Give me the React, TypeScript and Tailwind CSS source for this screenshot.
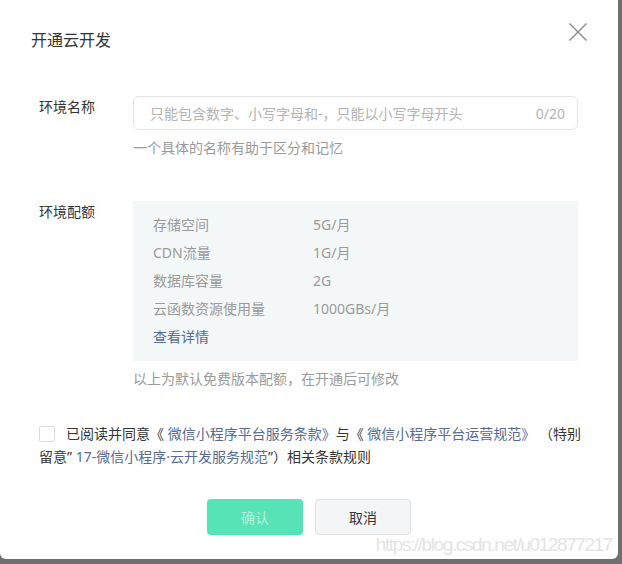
const quota = [
  { label: '存储空间', value: '5G/月' },
  { label: 'CDN流量', value: '1G/月' },
  { label: '数据库容量', value: '2G' },
  { label: '云函数资源使用量', value: '1000GBs/月' },
];

export default function App() {
  return (
    <div className="relative w-[622px] h-[564px] overflow-hidden bg-[#6f6f6f] font-['Noto_Sans','Noto_Sans_CJK_SC',sans-serif] text-[#353535]">
      <div className="relative w-[618px] h-[559px] bg-white rounded-b-[6px]">
        {/* Header */}
        <div className="pt-[28px] pl-[31px] text-[16px] leading-[24px]">开通云开发</div>
        <button className="absolute top-[23px] right-[31px] text-[#8a8a8a]">
          <svg width="18" height="18" viewBox="0 0 18 18" fill="none" stroke="currentColor" strokeWidth="1.4">
            <path d="M0.5 0.5L17.5 17.5M17.5 0.5L0.5 17.5" />
          </svg>
        </button>

        {/* Name */}
        <div className="flex mt-[44px]">
          <div className="w-[133px] pl-[39px] pt-px text-[14px] leading-[20px]">环境名称</div>
          <div className="w-[445px]">
            <div className="flex items-center justify-between h-[34px] pl-[16px] pr-[12px] border border-[#e4e4e4] rounded-[6px] text-[14px]">
              <span className="text-[#b3b3b3]">只能包含数字、小写字母和-，只能以小写字母开头</span>
              <span className="text-[#b3b3b3]">0/20</span>
            </div>
            <p className="mt-[8px] text-[14px] leading-[20px] text-[#9a9a9a]">一个具体的名称有助于区分和记忆</p>
          </div>
        </div>

        {/* Quota */}
        <div className="flex mt-[43px]">
          <div className="w-[133px] pl-[39px] pt-px text-[14px] leading-[20px]">环境配额</div>
          <div className="w-[445px]">
            <div className="bg-[#f4f7f8] py-[10px] pl-[20px] text-[14px] leading-[28px]">
              {quota.map((q) => (
                <div key={q.label} className="flex text-[#9a9a9a]">
                  <span className="w-[160px]">{q.label}</span>
                  <span>{q.value}</span>
                </div>
              ))}
              <a className="text-[#576b95]">查看详情</a>
            </div>
            <p className="mt-[8px] text-[14px] leading-[20px] text-[#9a9a9a]">以上为默认免费版本配额，在开通后可修改</p>
          </div>
        </div>

        {/* Agreement */}
        <p className="mt-[33px] pl-[39px] pr-[36px] text-[14px] leading-[23px]">
          <span className="inline-block w-4 h-4 mr-[11px] align-middle relative -top-px border border-[#d9d9d9] rounded-[2px]" />
          已阅读并同意《 <a className="text-[#576b95]">微信小程序平台服务条款》</a>与《 <a className="text-[#576b95]">微信小程序平台运营规范》</a> （特别留意” <a className="text-[#576b95]">17-微信小程序·云开发服务规范</a>”）相关条款规则
        </p>

        {/* Buttons */}
        <div className="flex justify-center gap-[12px] mt-[31px]">
          <button className="w-[96px] h-[36px] rounded-[4px] bg-[#57e3b6] text-[14px] text-[#b4f2dc]">确认</button>
          <button className="w-[96px] h-[36px] rounded-[4px] bg-[#f4f5f7] border border-[#e0e0e0] text-[14px] text-[#353535]">取消</button>
        </div>
      </div>

      <div className="absolute right-[10px] top-[533px] font-['Liberation_Sans',sans-serif] text-[19px] leading-[24px] tracking-[-1.4px] text-[#e4e4e4]">
        https://blog.csdn.net/u012877217
      </div>
    </div>
  );
}
